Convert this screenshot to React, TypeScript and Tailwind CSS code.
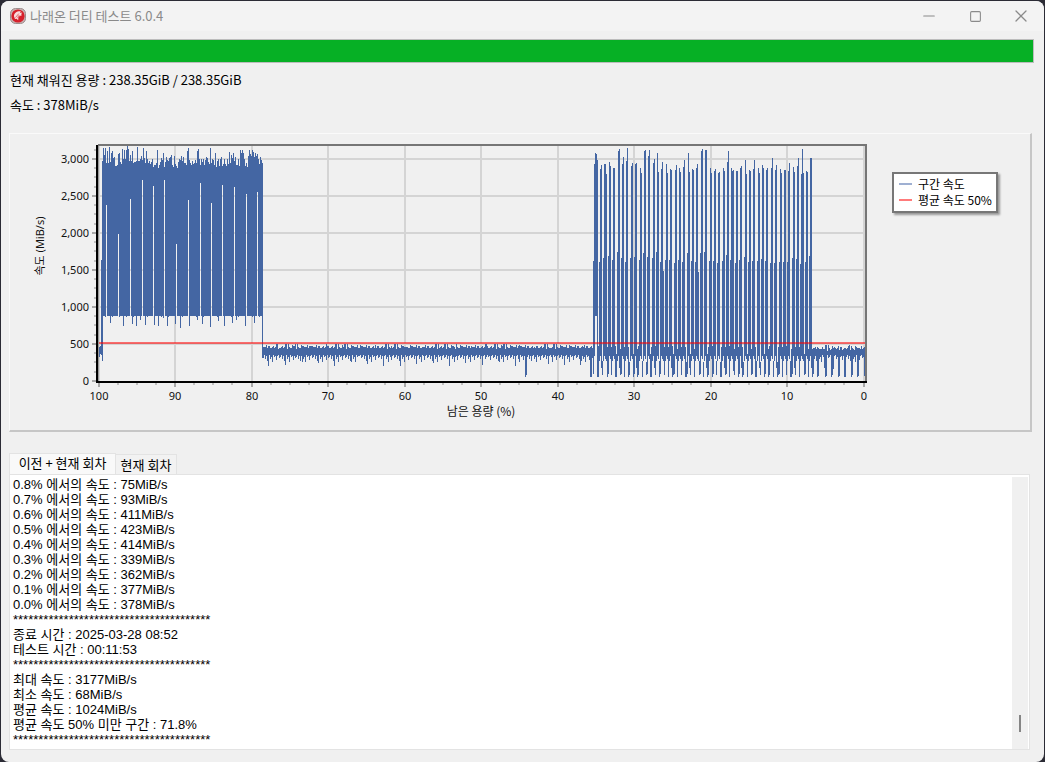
import { useState } from 'react';
import { Minus, Square, X } from 'lucide-react';

const COLOR = '#4466a3';

// first section: top edge of each 1px column, starting at x = 102
const BURST_TOPS = [
  161, 148, 155, 148, 163, 151, 163, 147, 162, 153, 151, 158, 157, 166, 166, 165, 154, 153, 162, 164, 149, 159, 150, 159,
  150, 146, 149, 161, 155, 161, 151, 163, 162, 162, 161, 147, 161, 161, 159, 156, 160, 148, 158, 163, 151, 159, 163, 161,
  164, 162, 159, 167, 165, 165, 163, 150, 168, 165, 162, 158, 160, 153, 167, 162, 157, 160, 161, 158, 157, 155, 165, 167,
  156, 164, 166, 168, 162, 159, 160, 156, 161, 157, 163, 163, 165, 151, 148, 160, 163, 165, 161, 164, 163, 160, 163, 151,
  149, 159, 165, 159, 162, 159, 165, 160, 157, 158, 162, 164, 148, 163, 159, 160, 165, 153, 167, 161, 159, 166, 159, 157,
  166, 164, 159, 164, 166, 159, 164, 152, 163, 155, 158, 153, 161, 157, 165, 165, 159, 166, 150, 153, 150, 153, 159, 166,
  163, 167, 156, 150, 154, 156, 150, 152, 157, 153, 156, 154, 159, 164, 157, 160, 163,
];

// narrow slits under the band: x -> where the blue ends
const SLITS: Record<number, number> = {
  106: 205, 118: 234, 130: 199, 142: 180, 153: 186, 164: 180, 176: 244, 188: 200,
  200: 183, 211: 203, 222: 185, 234: 187, 246: 194, 257: 192,
};

const BURST_DIPS: Record<number, number> = {
  110: 323, 123: 326, 132: 324, 136: 326, 140: 320, 145: 325, 154: 325, 158: 326, 163: 318, 167: 326, 175: 324,
  180: 328, 189: 326, 197: 320, 202: 324, 210: 327, 218: 321, 224: 326, 232: 323, 236: 320, 245: 326, 254: 323,
};

const FLAT_TOPS = [347, 344, 346, 348, 346, 347, 349, 346, 345, 348, 347, 344, 348, 346, 347, 345, 347, 348, 346, 344, 348, 348, 347];
const FLAT_BOTTOMS = [357, 355, 359, 356, 361, 356, 355, 359, 357, 362, 355, 357, 356, 360, 356, 355, 358];

const FLAT_DIPS: Record<number, number> = {
  263: 358, 268: 366, 285: 365, 302: 362, 318: 363, 334: 366, 351: 362, 367: 364, 383: 366, 400: 366, 416: 364,
  433: 363, 449: 366, 465: 363, 482: 365, 499: 362, 515: 366, 525: 377, 526: 375, 548: 364, 564: 365, 580: 365, 590: 377, 591: 377,
};

// second section, one entry per pillar: [x, shoulder top, column tops...]
const PILLARS = [
  [593, 261, 164, 153, 154, 160], [599, 262, 169, 165], [603, 258, 164, 164, 174], [608, 256, 162, 166],
  [612, 260, 168, 168], [617, 252, 151, 149], [621, 258, 164, 157], [625, 262, 161, 148],
  [630, 258, 166, 163], [634, 257, 164, 163], [639, 260, 168, 173], [643, 253, 151, 150],
  [647, 257, 156, 150], [652, 258, 163, 159], [656, 252, 153, 172], [660, 262, 169, 162, 271],
  [665, 260, 164, 173], [669, 260, 169, 170], [674, 263, 170, 165], [678, 260, 168, 172],
  [682, 262, 167, 160], [687, 253, 153, 172], [691, 261, 169, 170], [695, 262, 168, 164, 272],
  [700, 253, 151, 149], [704, 252, 150, 150], [709, 261, 168, 173], [713, 261, 171, 169],
  [717, 263, 173, 172], [722, 261, 168, 171], [726, 255, 162, 151], [730, 260, 168, 171, 170],
  [735, 263, 171, 171], [739, 260, 168, 166], [744, 257, 160, 174], [748, 262, 170, 171],
  [752, 261, 169, 160], [757, 261, 168, 173], [761, 259, 165, 168], [765, 261, 170, 168],
  [770, 263, 168, 158], [774, 263, 170, 165], [779, 262, 169, 173], [783, 262, 170, 170],
  [787, 262, 171, 163], [792, 258, 167, 172], [796, 259, 166, 158], [800, 264, 174, 149, 173],
  [805, 262, 171, 172], [809, 256, 158, 158],
];

const GAP_TOPS = [347, 361, 349, 346, 354, 347, 362];

const TAIL_DIPS: Record<number, number> = {
  812: 377, 813: 374, 817: 377, 818: 376, 824: 368, 825: 377, 826: 376, 831: 377, 832: 375, 833: 369, 838: 377, 839: 376,
  844: 377, 845: 377, 851: 377, 852: 375, 857: 377, 858: 376, 864: 376,
};

function buildPath() {
  let d = '';
  const col = (x: number, top: number, bottom: number) => {
    d += `M${x} ${top}h1V${bottom}h-1z`;
  };

  [[98, 352, 355], [99, 347, 357], [100, 346, 354], [101, 260, 355], [102, 161, 361]].forEach(([x, t, b]) => col(x, t, b));
  BURST_TOPS.forEach((top, i) => {
    const x = 102 + i;
    col(x, top, SLITS[x] ?? BURST_DIPS[x] ?? (x % 7 === 0 ? 317 : 316));
  });
  col(262, 163, 358);

  for (let x = 263; x < 593; x++) {
    const i = x - 263;
    col(x, FLAT_TOPS[(i * 5 + (i >> 4)) % 23], FLAT_DIPS[x] ?? FLAT_BOTTOMS[(i + (i >> 5)) % 17]);
  }

  PILLARS.forEach((p, i) => {
    const [x, ...tops] = p;
    const next = i + 1 < PILLARS.length ? PILLARS[i + 1][0] : 812;
    const bottoms = [i % 3 ? 361 : 374, 356, i % 4 === 1 ? 368 : 359, i % 3 === 1 ? 371 : 361, 377];
    tops.forEach((top, j) => {
      const lifted = i === 0 && (j === 2 || j === 3);
      col(x + j, top, lifted ? 316 : bottoms[j]);
    });
    for (let gx = x + tops.length; gx < next; gx++) {
      const last = gx === next - 1;
      col(gx, GAP_TOPS[(gx + i) % 7], last && i % 2 ? 375 : 377);
    }
  });

  for (let x = 812; x < 865; x++) {
    const i = x - 812;
    col(x, FLAT_TOPS[(i * 5) % 23] + (i % 3 === 0 ? 2 : 1), TAIL_DIPS[x] ?? FLAT_BOTTOMS[i % 17]);
  }
  return d;
}

const SPEED_PATH = buildPath();
const X_TICKS = Array.from({ length: 41 }, (_, i) => i);
const Y_TICKS = Array.from({ length: 26 }, (_, i) => i);

function SpeedChart() {
  return (
    <svg
      width="870"
      height="296"
      viewBox="10 134 870 296"
      className="shrink-0 font-['Noto_Sans','Noto_Sans_CJK_KR',sans-serif] text-[11px]"
      role="img"
      aria-label="속도"
    >
      <g shapeRendering="crispEdges">
        {[0, 1, 2, 3, 4, 5, 6, 7, 8, 9, 10].map((i) => (
          <rect key={i} x={98 + Math.floor(i * 76.5)} y="146" width="2" height="235" fill="#d4d4d4" />
        ))}
        {[1, 2, 3, 4, 5, 6].map((i) => (
          <rect key={i} x="98" y={380 - i * 37} width="767" height="2" fill="#d4d4d4" />
        ))}
        {X_TICKS.map((i) => (
          <rect
            key={i}
            x={98 + Math.floor(i * 19.125)}
            y="383"
            width="2"
            height={i % 4 ? 2 : 4}
            fill={i % 4 ? '#c0c0c0' : '#a8a8a8'}
          />
        ))}
        {Y_TICKS.map((i) => (
          <rect
            key={i}
            x={i % 4 ? 94 : 92}
            y={380 - Math.round(i * 9.25)}
            width={i % 4 ? 2 : 4}
            height="2"
            fill={i % 4 ? '#c0c0c0' : '#a8a8a8'}
          />
        ))}
        <path d={SPEED_PATH} fill={COLOR} />
        <rect x="98" y="342" width="767" height="2" fill="#ff0000" opacity="0.55" />
        <rect x="98" y="144" width="769" height="2" fill="#767676" />
        <rect x="865" y="144" width="2" height="239" fill="#767676" />
        <rect x="96" y="145" width="2" height="238" fill="#000" />
        <rect x="98" y="146" width="1" height="235" fill="#999" />
        <rect x="96" y="381" width="771" height="2" fill="#000" />
      </g>
      <g fill="#111" textAnchor="end">
        {['0', '500', '1,000', '1,500', '2,000', '2,500', '3,000'].map((t, i) => (
          <text key={t} x="89" y={385 - i * 37}>{t}</text>
        ))}
      </g>
      <g fill="#111" textAnchor="middle">
        {[100, 90, 80, 70, 60, 50, 40, 30, 20, 10, 0].map((t, i) => (
          <text key={t} x={99 + Math.floor(i * 76.5)} y="400">{t}</text>
        ))}
        <text x="481" y="416" className="font-['Noto_Sans_CJK_KR',sans-serif] text-xs">남은 용량 (%)</text>
        <text transform="translate(44 246) rotate(-90)">속도 (MiB/s)</text>
      </g>
    </svg>
  );
}

function Legend() {
  return (
    <ul className="mt-[38px] ml-3 h-[41px] w-[106px] shrink-0 border-2 border-[#777] bg-white pt-[2px] pl-[5px] text-xs/4 shadow-[2px_2px_2px_#999]">
      <li className="flex items-center gap-[6px] whitespace-nowrap">
        <span className="h-[2px] w-[13px] shrink-0 bg-[#9fb0d2]" />
        구간 속도
      </li>
      <li className="flex items-center gap-[6px] whitespace-nowrap">
        <span className="h-[2px] w-[13px] shrink-0 bg-[#ff7b7b]" />
        평균 속도 50%
      </li>
    </ul>
  );
}

function AppIcon() {
  return (
    <svg width="16" height="16" viewBox="0 0 16 16" className="shrink-0">
      <rect x="0.5" y="0.5" width="15" height="15" rx="5" fill="#c9b0b0" stroke="#9b8e8e" />
      <circle cx="8" cy="8" r="6.6" fill="#d6202b" />
      <path d="M4 8.5C3.8 5 6.5 3 10.8 3.2L10 5l2.2-.4L11 6.6l1.4.4-2.6 1L8.4 9l-.2 3.2L6.6 10.8 5 11z" fill="#f8dcdc" />
      <path d="M5.5 9.5L8.8 5.6M7.4 9.6l2-2.6" stroke="#d6202b" strokeWidth="0.6" />
    </svg>
  );
}

const STARS = '*'.repeat(39);

const LOG = [
  '0.8% 에서의 속도 : 75MiB/s',
  '0.7% 에서의 속도 : 93MiB/s',
  '0.6% 에서의 속도 : 411MiB/s',
  '0.5% 에서의 속도 : 423MiB/s',
  '0.4% 에서의 속도 : 414MiB/s',
  '0.3% 에서의 속도 : 339MiB/s',
  '0.2% 에서의 속도 : 362MiB/s',
  '0.1% 에서의 속도 : 377MiB/s',
  '0.0% 에서의 속도 : 378MiB/s',
  STARS,
  '종료 시간 : 2025-03-28 08:52',
  '테스트 시간 : 00:11:53',
  STARS,
  '최대 속도 : 3177MiB/s',
  '최소 속도 : 68MiB/s',
  '평균 속도 : 1024MiB/s',
  '평균 속도 50% 미만 구간 : 71.8%',
  STARS,
].join('\n');

export default function App() {
  const [tab, setTab] = useState(0);

  return (
    <div className="flex min-h-screen flex-col bg-[#2b2b35] p-px font-['Noto_Sans_CJK_KR',sans-serif] text-[13px] text-black">
      <div className="flex flex-1 flex-col overflow-hidden rounded-lg bg-[#f0f0f0]">
        <header className="flex h-[30px] items-center bg-[#f3f3f3] pl-[9px] text-[#8a8a8a]">
          <AppIcon />
          <h1 className="ml-1 flex-1">나래온 더티 테스트 6.0.4</h1>
          <button aria-label="최소화" className="flex h-full w-[46px] items-center justify-center">
            <Minus size={18} strokeWidth={1.5} />
          </button>
          <button aria-label="최대화" className="flex h-full w-[46px] items-center justify-center">
            <Square size={13} strokeWidth={2} />
          </button>
          <button aria-label="닫기" className="flex h-full w-[46px] items-center justify-center">
            <X size={20} strokeWidth={1.5} />
          </button>
        </header>

        <main className="flex flex-1 flex-col pt-2 pr-3 pb-3 pl-2">
          <progress
            value={100}
            max={100}
            aria-label="진행률"
            className="mr-[-2px] block h-6 w-auto appearance-none border border-[#bcbcbc] [&::-webkit-progress-bar]:bg-[#e6e6e6] [&::-webkit-progress-value]:bg-[#06b025]"
          />
          <p className="mt-[9px] ml-px leading-4">현재 채워진 용량 : 238.35GiB / 238.35GiB</p>
          <p className="mt-[9px] ml-px leading-4">속도 : 378MiB/s</p>

          <section className="mt-5 flex h-[299px] items-start overflow-hidden border-t border-r-2 border-b-2 border-l border-t-[#fafafa] border-r-[#c6c6c6] border-b-[#c6c6c6] border-l-[#fafafa]">
            <SpeedChart />
            <Legend />
          </section>

          <div role="tablist" className="mt-[21px] flex items-end">
            <button
              role="tab"
              aria-selected={tab === 0}
              onClick={() => setTab(0)}
              className="h-[21px] w-[107px] border border-b-0 border-[#e3e3e3] bg-[#f9f9f9] pb-[3px] leading-4 whitespace-nowrap"
            >
              이전 + 현재 회차
            </button>
            <button
              role="tab"
              aria-selected={tab === 1}
              onClick={() => setTab(1)}
              className="h-5 w-[61px] border border-b-0 border-l-0 border-[#e3e3e3] bg-[#f2f2f2] leading-4 whitespace-nowrap"
            >
              현재 회차
            </button>
          </div>
          <div className="mr-[2px] flex flex-1 border border-[#e3e3e3] bg-white pt-[2px] pr-px">
            <textarea
              readOnly
              aria-label="로그"
              value={LOG}
              className="block h-[272px] flex-1 resize-none overflow-hidden pl-[3px] font-['Liberation_Sans','Noto_Sans_CJK_KR',sans-serif] leading-[15px] outline-none"
            />
            <div className="flex w-4 flex-col items-center justify-end bg-[#f0f0f0] pb-[17px]">
              <div className="h-[17px] w-[2px] bg-[#858585]" />
            </div>
          </div>
        </main>
      </div>
    </div>
  );
}
